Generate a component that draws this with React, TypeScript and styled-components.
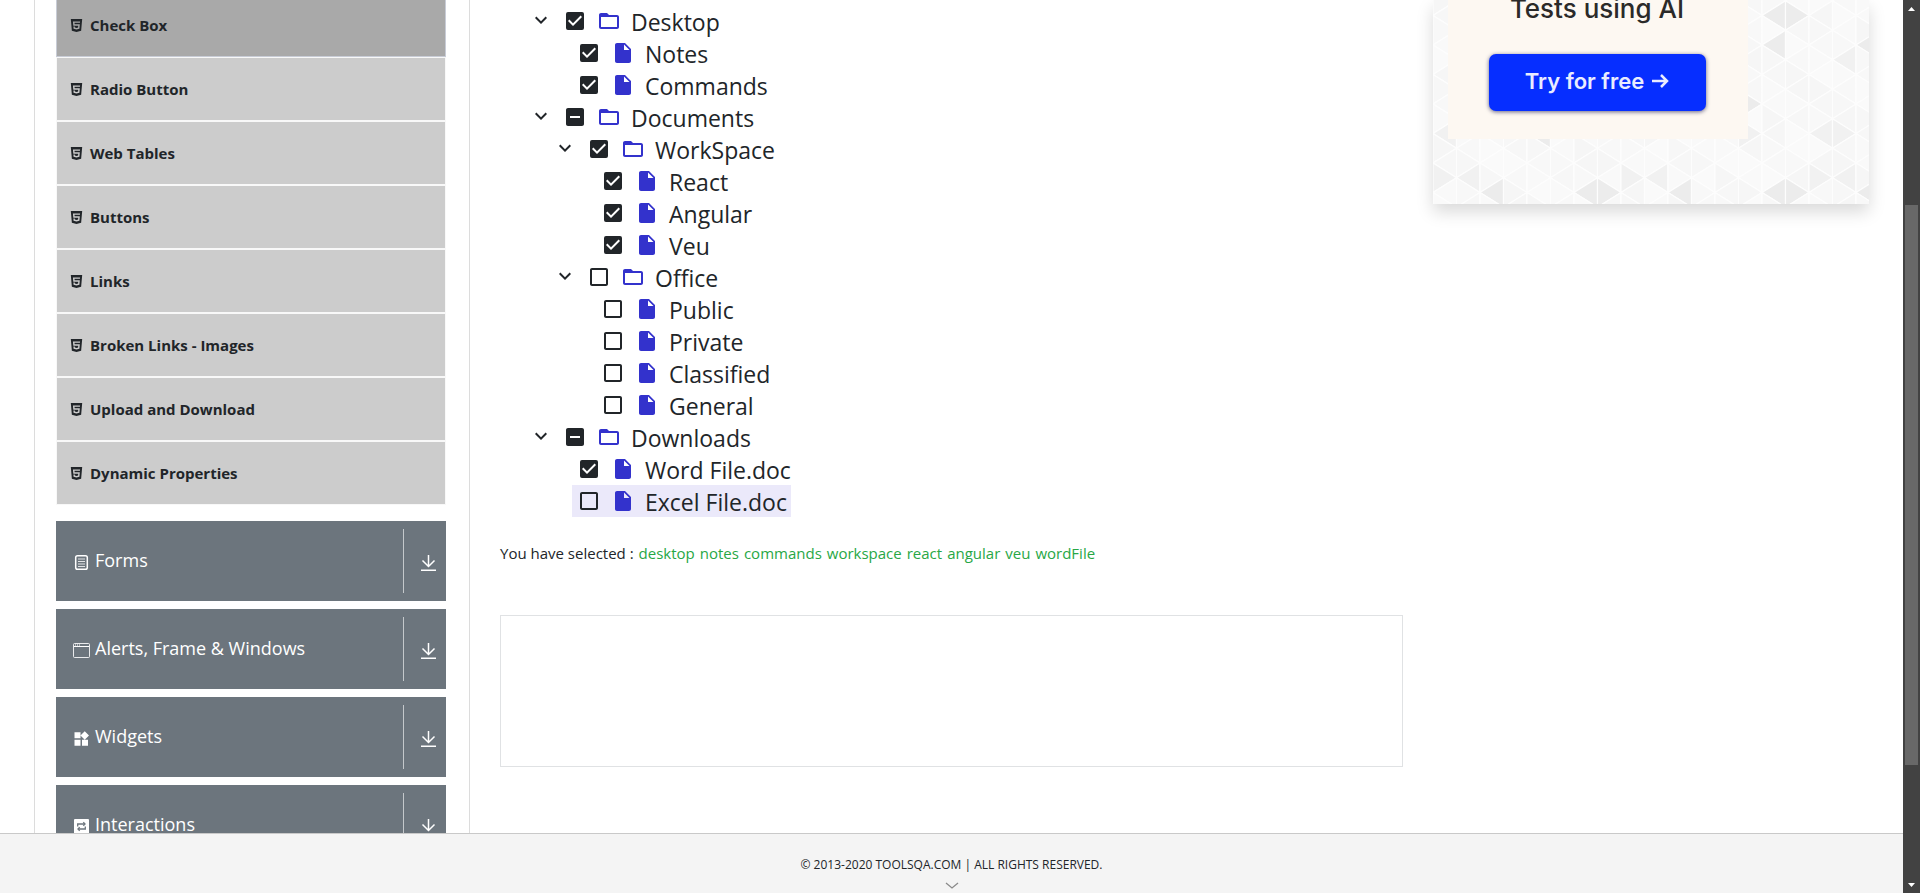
import React, { useState } from 'react';
import styled, { createGlobalStyle, css } from 'styled-components';
import {
  MdCheckBox,
  MdCheckBoxOutlineBlank,
  MdFolderOpen,
  MdIndeterminateCheckBox,
  MdInsertDriveFile,
  MdKeyboardArrowDown,
  MdWidgets,
} from 'react-icons/md';
import { SiHtml5 } from 'react-icons/si';

const FONT = '"Segoe UI", "Open Sans", "Noto Sans", sans-serif';

const GlobalStyle = createGlobalStyle`
  *, *::before, *::after { box-sizing: border-box; }
  body {
    margin: 0;
    background: #fff;
    color: #212529;
    font-family: ${FONT};
    font-size: 15px;
    line-height: 24px;
    overflow: hidden;
  }
  button { font: inherit; color: inherit; border: 0; padding: 0; background: none; cursor: pointer; }
  ul, ol { list-style: none; margin: 0; padding: 0; }
`;

/* ---------- page frame ---------- */

const Frame = styled.div`
  display: flex;
  height: 100vh;
`;

const Page = styled.div`
  flex: 1;
  min-width: 0;
  display: flex;
  flex-direction: column;
`;

const Content = styled.main`
  flex: 1;
  min-height: 0;
  overflow: hidden;
  display: grid;
  grid-template-columns: 436fr 903fr 436fr;
  column-gap: 30px;
  padding: 0 34px;
`;

const Footer = styled.footer`
  flex: none;
  height: 60px;
  display: flex;
  flex-direction: column;
  align-items: center;
  padding-top: 19px;
  background: #f4f4f4;
  border-top: 1px solid #c9c9c9;
  font-size: 12px;
`;

const ScrollHint = styled.svg`
  display: block;
  margin-top: 5px;
`;

const Scrollbar = styled.div`
  flex: none;
  width: 17px;
  display: flex;
  flex-direction: column;
  align-items: center;
  background: #424242;
`;

const ScrollArrow = styled.svg`
  flex: none;
  display: block;
  width: 17px;
  height: 17px;
`;

const ScrollTrack = styled.div`
  flex: 1;
  display: flex;
  flex-direction: column;
`;

const ScrollThumb = styled.div`
  width: 13px;
  flex: 560;
  background: #686868;
`;

const ScrollSpace = styled.div<{ $size: number }>`
  flex: ${(p) => p.$size};
`;

/* ---------- sidebar ---------- */

const Sidebar = styled.nav`
  min-width: 0;
  padding: 0 23px 0 21px;
  border: solid #dcdcdc;
  border-width: 0 1px;
`;

const MenuList = styled.ul`
  margin: -7px 0 16px;
`;

const MenuItem = styled.li<{ $active?: boolean }>`
  height: 64px;
  border: 1px solid ${(p) => (p.$active ? '#c8ccd6' : '#f8f8f8')};
  background: ${(p) => (p.$active ? '#a9a9a9' : '#ccc')};
`;

const MenuLink = styled.a`
  display: flex;
  align-items: center;
  gap: 7px;
  height: 100%;
  padding: 0 13px;
  color: #212529;
  font-weight: 700;
  text-decoration: none;
`;

const GroupHeader = styled.button`
  display: flex;
  align-items: center;
  width: 100%;
  height: 80px;
  margin-bottom: 8px;
  padding: 8px 9px 8px 17px;
  background: #6c757d;
  color: #fff;
  text-align: left;
`;

const GroupIcon = styled.span`
  display: flex;
  width: 18px;
  margin-right: 4px;
  padding-top: 4px;
  svg { display: block; }
`;

const GroupTitle = styled.span`
  flex: 1;
  padding-bottom: 2px;
  font-size: 18px;
`;

const GroupToggle = styled.span`
  display: flex;
  align-items: center;
  height: 64px;
  padding: 4px 0 0 16px;
  border-left: 1px solid #c4c8cb;
`;

/* ---------- tree ---------- */

const Main = styled.section`
  min-width: 0;
`;

const Tree = styled.div`
  padding: 5px 0 0 24px;
  font-size: 23px;
`;

const Branch = styled.ol<{ $nested?: boolean }>`
  ${(p) => p.$nested && css`padding-left: 24px;`}
`;

const Row = styled.span`
  display: flex;
  height: 32px;
`;

const Collapse = styled.button`
  display: flex;
  align-items: flex-start;
  padding: 3px 5px;
`;

const LeafSpace = styled.span`
  width: 24px;
`;

const NodeLabel = styled.label<{ $hover?: boolean }>`
  position: relative;
  display: flex;
  align-items: center;
  padding-right: 4px;
  cursor: pointer;
  background: ${(p) => (p.$hover ? '#ebe9fa' : 'transparent')};
  &:hover { background: #ebe9fa; }
`;

const HiddenCheck = styled.input`
  position: absolute;
  width: 24px;
  height: 24px;
  margin: 0 5px;
  opacity: 0;
`;

const NodeIcon = styled.span<{ $color?: string }>`
  display: flex;
  padding: 0 5px;
  color: ${(p) => p.$color ?? '#212529'};
`;

const NodeTitle = styled.span`
  padding: 2px 0 0 5px;
  white-space: nowrap;
  line-height: 32px;
`;

const Result = styled.p`
  display: flex;
  flex-wrap: wrap;
  gap: 5px;
  margin: 24px 0 50px;
`;

const Picked = styled.span`
  color: #28a745;
`;

const Banner = styled.div`
  height: 152px;
  border: 1px solid #e0e2e4;
`;

/* ---------- advert ---------- */

const Advert = styled.aside`
  position: relative;
  align-self: start;
  height: 204px;
  padding-left: 15px;
  box-shadow: 0 8px 16px rgba(0, 0, 0, 0.15);
`;

const Pattern = styled.svg`
  position: absolute;
  inset: 0;
  width: 100%;
  height: 100%;
  background: #f8f8f8;
`;

const AdCard = styled.div`
  position: relative;
  width: 300px;
  height: 139px;
  display: flex;
  flex-direction: column;
  align-items: center;
  padding-right: 2px;
  background: #fdf8f2;
  font-family: Inter, sans-serif;
`;

const AdTitle = styled.p`
  margin: -7px 0 29px;
  font-size: 26px;
  line-height: 32px;
  font-weight: 500;
  color: #2b2a29;
`;

const AdButton = styled.button`
  display: flex;
  align-items: center;
  justify-content: center;
  gap: 7px;
  width: 217px;
  height: 57px;
  padding-bottom: 3px;
  border-radius: 7px;
  background: #062eff;
  box-shadow: 0 1px 4px rgba(0, 0, 60, 0.6);
  color: #e9ecff;
  font-size: 22px;
  font-weight: 600;
`;

/* ---------- data ---------- */

type TreeNode = { id: string; label: string; children?: TreeNode[] };

const nodes: TreeNode[] = [
  { id: 'desktop', label: 'Desktop', children: [
    { id: 'notes', label: 'Notes' },
    { id: 'commands', label: 'Commands' },
  ] },
  { id: 'documents', label: 'Documents', children: [
    { id: 'workspace', label: 'WorkSpace', children: [
      { id: 'react', label: 'React' },
      { id: 'angular', label: 'Angular' },
      { id: 'veu', label: 'Veu' },
    ] },
    { id: 'office', label: 'Office', children: [
      { id: 'public', label: 'Public' },
      { id: 'private', label: 'Private' },
      { id: 'classified', label: 'Classified' },
      { id: 'general', label: 'General' },
    ] },
  ] },
  { id: 'downloads', label: 'Downloads', children: [
    { id: 'wordFile', label: 'Word File.doc' },
    { id: 'excelFile', label: 'Excel File.doc' },
  ] },
];

const menu = [
  'Check Box', 'Radio Button', 'Web Tables', 'Buttons', 'Links',
  'Broken Links - Images', 'Upload and Download', 'Dynamic Properties',
];

const leavesOf = (node: TreeNode): string[] =>
  node.children ? node.children.flatMap(leavesOf) : [node.id];

const flatten = (list: TreeNode[]): TreeNode[] =>
  list.flatMap((n) => [n, ...flatten(n.children ?? [])]);

/* ---------- icons ---------- */

const FormsIcon = () => (
  <svg width="18" height="18" viewBox="0 0 18 18" fill="none" stroke="#fff">
    <rect x="2.7" y="1.7" width="11.600" height="13.600" rx="1.800" strokeWidth="1.500" />
    <path d="M5 5h7M5 7.500h7M5 10h7M5 12.500h7" strokeWidth="1" opacity=".8" />
  </svg>
);

const WindowIcon = () => (
  <svg width="18" height="18" viewBox="0 0 18 18" fill="none" stroke="#fff">
    <rect x=".5" y="1.500" width="16" height="14" rx="1" opacity=".85" />
    <path d="M1 4.500h15" />
    <path d="M2 3h5" strokeDasharray="1 1" />
  </svg>
);

const WidgetsIcon = () => <MdWidgets size={18} viewBox="1 0 24 24" />;

const InteractionsIcon = () => (
  <svg width="18" height="18" viewBox="0 0 18 18">
    <rect x="1" y="1" width="15" height="15" rx="1" fill="#fff" />
    <g fill="none" stroke="#6c757d" strokeWidth="1.300">
      <path d="M4.700 8.500V6h6.800M12.300 8.500V11H5.500" />
      <path d="M10.300 4.300 12 6l-1.700 1.700M6.700 9.300 5 11l1.700 1.700" />
    </g>
  </svg>
);

const DownIcon = () => (
  <svg width="17" height="18" viewBox="0 0 17 18" fill="none" stroke="#fff" strokeWidth="1.500">
    <path d="M8.500 1v11M2.500 6.500l6 6 6-6M1 16.200h15" />
  </svg>
);

const groups = [
  { title: 'Forms', icon: <FormsIcon /> },
  { title: 'Alerts, Frame & Windows', icon: <WindowIcon /> },
  { title: 'Widgets', icon: <WidgetsIcon /> },
  { title: 'Interactions', icon: <InteractionsIcon /> },
];

/* ---------- parts ---------- */

type NodeProps = { node: TreeNode; picked: Set<string>; toggle: (n: TreeNode) => void };

const TreeItem = ({ node, picked, toggle }: NodeProps) => {
  const [open, setOpen] = useState(true);
  const leaves = leavesOf(node);
  const count = leaves.filter((l) => picked.has(l)).length;
  const all = count === leaves.length;
  const Box = all ? MdCheckBox : count ? MdIndeterminateCheckBox : MdCheckBoxOutlineBlank;
  const Kind = node.children ? MdFolderOpen : MdInsertDriveFile;
  return (
    <li>
      <Row>
        {node.children ? (
          <Collapse type="button" aria-label="Toggle" onClick={() => setOpen(!open)}>
            <MdKeyboardArrowDown size={24} />
          </Collapse>
        ) : (
          <LeafSpace />
        )}
        <NodeLabel $hover={node.id === 'excelFile'}>
          <HiddenCheck type="checkbox" checked={all} onChange={() => toggle(node)} />
          <NodeIcon><Box size={24} /></NodeIcon>
          <NodeIcon $color="#3332cc"><Kind size={24} /></NodeIcon>
          <NodeTitle>{node.label}</NodeTitle>
        </NodeLabel>
      </Row>
      {node.children && open && (
        <Branch $nested>
          {node.children.map((c) => (
            <TreeItem key={c.id} node={c} picked={picked} toggle={toggle} />
          ))}
        </Branch>
      )}
    </li>
  );
};

const LIGHT = ['#f6f6f6', '#f9f9f9', '#f7f7f7', '#fafafa', '#f8f8f8'];

/* column.row of the darker triangles */
const DARK = new Set([
  '2.12', '6.12', '7.12', '10.12', '14.12', '15.12', '18.12',
  '14.0', '15.0', '14.2', '18.2', '13.6', '4.8',
]);
const MILD = new Set([
  '0.8', '0.11', '1.11', '8.11', '9.11', '16.11', '17.11', '17.3', '16.8', '17.8', '13.8',
]);

const TrianglePattern = () => {
  const w = 23.5;
  const h = 29.5;
  const cells: React.ReactNode[] = [];
  for (let c = 0; c < 19; c += 1) {
    for (let r = -1; r < 14; r += 1) {
      const x = c * w;
      const y = (r * h) / 2 + 0.75;
      const pointsRight = (c + r) % 2 !== 0;
      const d = pointsRight
        ? `M${x} ${y}V${y + h}L${x + w} ${y + h / 2}Z`
        : `M${x + w} ${y}V${y + h}L${x} ${y + h / 2}Z`;
      const key = `${c}.${r}`;
      const base = LIGHT[(c * 3 + (r + 1) * 2 + ((c * r) & 3)) % LIGHT.length];
      const shade = DARK.has(key) ? '#ececec' : MILD.has(key) ? '#f1f1f1' : base;
      cells.push(<path key={key} d={d} fill={shade} />);
    }
  }
  return (
    <Pattern aria-hidden="true" stroke="#fdfdfd" strokeWidth="1.200">
      {cells}
    </Pattern>
  );
};

export default function App() {
  const [picked, setPicked] = useState(
    new Set(['notes', 'commands', 'react', 'angular', 'veu', 'wordFile']),
  );

  const toggle = (node: TreeNode) => {
    const leaves = leavesOf(node);
    const next = new Set(picked);
    const all = leaves.every((l) => next.has(l));
    leaves.forEach((l) => (all ? next.delete(l) : next.add(l)));
    setPicked(next);
  };

  const chosen = flatten(nodes).filter((n) => leavesOf(n).every((l) => picked.has(l)));

  return (
    <>
      <GlobalStyle />
      <Frame>
        <Page>
          <Content>
            <Sidebar>
              <MenuList>
                {menu.map((name, i) => (
                  <MenuItem key={name} $active={i === 0}>
                    <MenuLink href="#">
                      <SiHtml5 size={13} />
                      {name}
                    </MenuLink>
                  </MenuItem>
                ))}
              </MenuList>
              {groups.map((g) => (
                <GroupHeader key={g.title} type="button">
                  <GroupIcon>{g.icon}</GroupIcon>
                  <GroupTitle>{g.title}</GroupTitle>
                  <GroupToggle><DownIcon /></GroupToggle>
                </GroupHeader>
              ))}
            </Sidebar>

            <Main>
              <Tree>
                <Branch>
                  {nodes.map((n) => (
                    <TreeItem key={n.id} node={n} picked={picked} toggle={toggle} />
                  ))}
                </Branch>
              </Tree>
              <Result>
                <span>You have selected :</span>
                {chosen.map((n) => <Picked key={n.id}>{n.id}</Picked>)}
              </Result>
              <Banner />
            </Main>

            <Advert>
              <TrianglePattern />
              <AdCard>
                <AdTitle>Tests using AI</AdTitle>
                <AdButton type="button">
                  Try for free
                  <svg width="18" height="18" viewBox="0 0 18 18" fill="none" stroke="currentColor" strokeWidth="2.500">
                    <path d="M1 9h15M10 3l6 6-6 6" />
                  </svg>
                </AdButton>
              </AdCard>
            </Advert>
          </Content>

          <Footer>
            <span>© 2013-2020 TOOLSQA.COM | ALL RIGHTS RESERVED.</span>
            <ScrollHint width="14" height="8" viewBox="0 0 14 8" fill="none" stroke="#8a8a8a" strokeWidth="1.300">
              <path d="M1 1l6 5 6-5" />
            </ScrollHint>
          </Footer>
        </Page>

        <Scrollbar aria-hidden="true">
          <ScrollArrow viewBox="0 0 17 17"><path d="M8.500 7l3.500 4H5z" fill="#fff" /></ScrollArrow>
          <ScrollTrack>
            <ScrollSpace $size={188} />
            <ScrollThumb />
            <ScrollSpace $size={111} />
          </ScrollTrack>
          <ScrollArrow viewBox="0 0 17 17"><path d="M8.500 11L12 7H5z" fill="#fff" /></ScrollArrow>
        </Scrollbar>
      </Frame>
    </>
  );
}
